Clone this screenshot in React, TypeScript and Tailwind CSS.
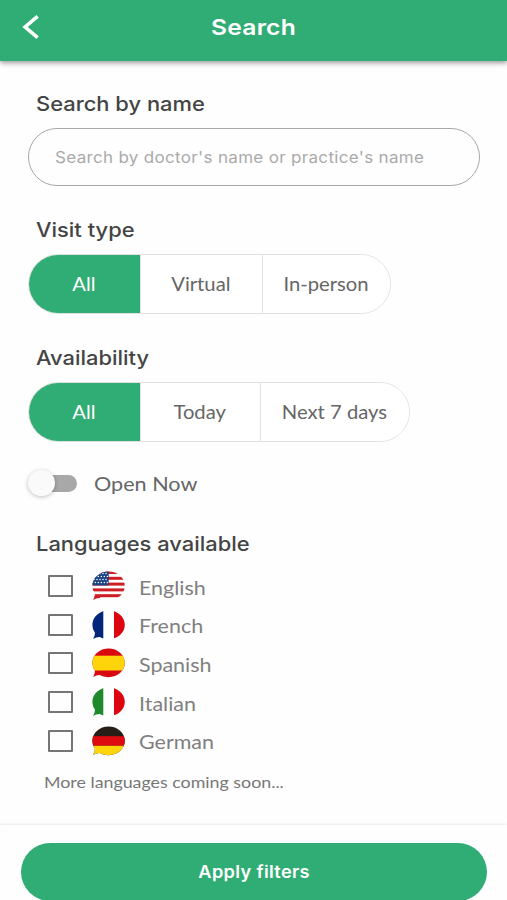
import { useState, type ReactNode } from "react";

type FlagCode = "us" | "fr" | "es" | "it" | "de";

const LANGUAGES: { code: FlagCode; name: string }[] = [
  { code: "us", name: "English" },
  { code: "fr", name: "French" },
  { code: "es", name: "Spanish" },
  { code: "it", name: "Italian" },
  { code: "de", name: "German" },
];

const VISIT_TYPES = [
  { label: "All", width: "w-[112px]" },
  { label: "Virtual", width: "w-[122px]" },
  { label: "In-person", width: "w-[129px]" },
];

const AVAILABILITY = [
  { label: "All", width: "w-[112px]" },
  { label: "Today", width: "w-[120px]" },
  { label: "Next 7 days", width: "w-[150px]" },
];

const STAR_ROWS = [2.5, 5.5, 8.5, 11.5];
const STAR_COLS = [2, 5, 8, 11, 14];

function FlagStripes({ code }: { code: FlagCode }) {
  switch (code) {
    case "us":
      return (
        <>
          <rect width="34" height="30" fill="#fff" />
          {[0, 5.8, 11.6, 17.4, 23.2].map((y) => (
            <rect key={y} y={y} width="34" height="3" fill="#d01c24" />
          ))}
          <rect y="25" width="8" height="5" fill="#d01c24" />
          <rect width="16.7" height="14.4" fill="#1c4484" />
          {STAR_ROWS.map((y, row) =>
            STAR_COLS.map((x) => (
              <circle key={`${x}-${y}`} cx={x + (row % 2) * 1.3} cy={y} r="0.75" fill="#fff" />
            )),
          )}
        </>
      );
    case "fr":
    case "it":
      return (
        <>
          <rect width="34" height="30" fill="#fff" />
          <rect width="11.3" height="30" fill={code === "fr" ? "#03267a" : "#1f8a2c"} />
          <rect x="22" width="12" height="30" fill="#dc0510" />
        </>
      );
    case "es":
      return (
        <>
          <rect width="34" height="30" fill="#d9070f" />
          <rect y="7.7" width="34" height="14.8" fill="#ffd40a" />
        </>
      );
    case "de":
      return (
        <>
          <rect width="34" height="30" fill="#281e18" />
          <rect y="10.2" width="34" height="9.6" fill="#dd0a10" />
          <rect y="19.8" width="34" height="10" fill="#ffd40a" />
        </>
      );
  }
}

function FlagBubble({ code }: { code: FlagCode }) {
  return (
    <svg viewBox="0 0 34 30" className="h-[30px] w-[34px] shrink-0">
      <clipPath id={`bubble-${code}`}>
        <path d="M16.6 .4C25.6 .4 32.8 6.8 32.8 14.8S25.6 29.2 16.6 29.2C13.4 29.2 10.4 28.4 7.9 27C6 26.8 3.2 27.8 .9 29C2.2 27.4 3 25 2.9 22.6C1.3 20.3 .4 17.7 .4 14.8C.4 6.8 7.6 .4 16.6 .4Z" />
      </clipPath>
      <g clipPath={`url(#bubble-${code})`}>
        <FlagStripes code={code} />
      </g>
    </svg>
  );
}

function SectionTitle({ children }: { children: ReactNode }) {
  return (
    <h2 className="ml-9 h-6 w-fit origin-left scale-x-[1.095] whitespace-nowrap text-[20px] leading-6 font-medium text-[#444444]">
      {children}
    </h2>
  );
}

interface SegmentedProps {
  options: { label: string; width: string }[];
  value: string;
  onChange: (value: string) => void;
}

function Segmented({ options, value, onChange }: SegmentedProps) {
  return (
    <div className="ml-7 flex h-[60px] w-fit overflow-hidden rounded-full border border-[#e2e2e2] font-[Lato,sans-serif]">
      {options.map(({ label, width }, index) => (
        <button
          key={label}
          type="button"
          onClick={() => onChange(label)}
          className={`${width} ${index > 0 ? "border-l border-[#e2e2e2] pr-[2px]" : "-ml-px"} ${
            index === options.length - 1 ? "-mr-px" : ""
          } ${
            value === label ? "bg-[#30ad74] text-white" : "bg-white text-[#666666]"
          } flex items-center justify-center`}
        >
          <span className="scale-x-[1.065] whitespace-nowrap text-[19px] leading-6">{label}</span>
        </button>
      ))}
    </div>
  );
}

export default function App() {
  const [query, setQuery] = useState("");
  const [visitType, setVisitType] = useState("All");
  const [availability, setAvailability] = useState("All");
  const [openNow, setOpenNow] = useState(false);
  const [selected, setSelected] = useState<FlagCode[]>([]);

  function toggleLanguage(code: FlagCode) {
    setSelected((current) =>
      current.includes(code) ? current.filter((item) => item !== code) : [...current, code],
    );
  }

  return (
    <div className="flex h-[900px] w-full flex-col overflow-hidden bg-[#fefefe] font-[Inter,sans-serif]">
      <header className="z-10 grid h-[61px] shrink-0 grid-cols-[60px_1fr_60px] items-center bg-[#30ad74] pb-[7px] shadow-[0_2px_5px_rgba(0,0,0,0.4)]">
        <button type="button" aria-label="Back" className="pl-[22px]">
          <svg viewBox="0 0 18 26" className="h-[26px] w-[18px]" fill="none" stroke="#fff" strokeWidth="3.6">
            <path d="M15.6 2.4L3.1 13L15.6 23.6" />
          </svg>
        </button>
        <h1 className="scale-x-[1.12] text-center text-[22px] leading-7 font-semibold tracking-[0.2px] text-white">
          Search
        </h1>
      </header>

      <main className="flex flex-1 flex-col pt-[31px]">
        <SectionTitle>Search by name</SectionTitle>
        <div className="mt-3 ml-7 flex h-[58px] w-[452px] items-center rounded-full border border-[#a8a8a8] px-[26px]">
          <input
            value={query}
            onChange={(event) => setQuery(event.target.value)}
            placeholder="Search by doctor's name or practice's name"
            className="w-[370px] origin-left scale-x-[1.063] bg-transparent text-[16px] tracking-[0.3px] text-[#444444] outline-none placeholder:text-[#aaaaaa]"
          />
        </div>

        <div className="mt-8">
          <SectionTitle>Visit type</SectionTitle>
        </div>
        <div className="mt-3">
          <Segmented options={VISIT_TYPES} value={visitType} onChange={setVisitType} />
        </div>

        <div className="mt-8">
          <SectionTitle>Availability</SectionTitle>
        </div>
        <div className="mt-3">
          <Segmented options={AVAILABILITY} value={availability} onChange={setAvailability} />
        </div>

        <div className="mt-[27px] ml-[27px] flex h-7 items-center font-[Lato,sans-serif]">
          <button
            type="button"
            role="switch"
            aria-checked={openNow}
            onClick={() => setOpenNow((current) => !current)}
            className="flex h-7 w-[50px] items-center"
          >
            <span
              className={`ml-1 flex h-[17px] w-[46px] items-center rounded-full ${
                openNow ? "justify-end bg-[#30ad74]/50" : "bg-[#a8a8a8]"
              }`}
            >
              <span className="-ml-[3px] h-[26px] w-[27px] shrink-0 rounded-full bg-[#fafafa] shadow-[0_1px_4px_rgba(0,0,0,0.25)]" />
            </span>
          </button>
          <span className="ml-[17px] origin-left scale-x-[1.08] whitespace-nowrap text-[20px] leading-6 text-[#666666]">
            Open Now
          </span>
        </div>

        <div className="mt-[35px]">
          <SectionTitle>Languages available</SectionTitle>
        </div>
        <ul className="mt-[11px] ml-12 font-[Lato,sans-serif]">
          {LANGUAGES.map(({ code, name }) => (
            <li key={code} className="flex h-[38.6px] items-center">
              <button
                type="button"
                role="checkbox"
                aria-checked={selected.includes(code)}
                aria-label={name}
                onClick={() => toggleLanguage(code)}
                className={`h-[22px] w-[25px] rounded-[1px] border-2 border-[#757575] ${
                  selected.includes(code) ? "bg-[#30ad74]" : ""
                }`}
              />
              <span className="ml-[19px] flex">
                <FlagBubble code={code} />
              </span>
              <span className="ml-[13px] origin-left scale-x-[1.13] pt-[3px] text-[19px] leading-6 text-[#808080]">
                {name}
              </span>
            </li>
          ))}
        </ul>
        <p className="mt-[10px] ml-11 w-fit origin-left scale-x-[1.113] font-[Lato,sans-serif] text-[16px] leading-6 whitespace-nowrap text-[#777777]">
          More languages coming soon...
        </p>
      </main>

      <footer className="h-[75px] shrink-0 bg-[#fefefe] px-[21px] pt-[18px] shadow-[0_-1px_2px_rgba(0,0,0,0.08)]">
        <button type="button" className="h-[58px] w-[466px] rounded-full bg-[#30ad74] text-white">
          <span className="inline-block scale-x-[1.07] text-[17px] leading-6 font-semibold tracking-[0.3px]">
            Apply filters
          </span>
        </button>
      </footer>
    </div>
  );
}
